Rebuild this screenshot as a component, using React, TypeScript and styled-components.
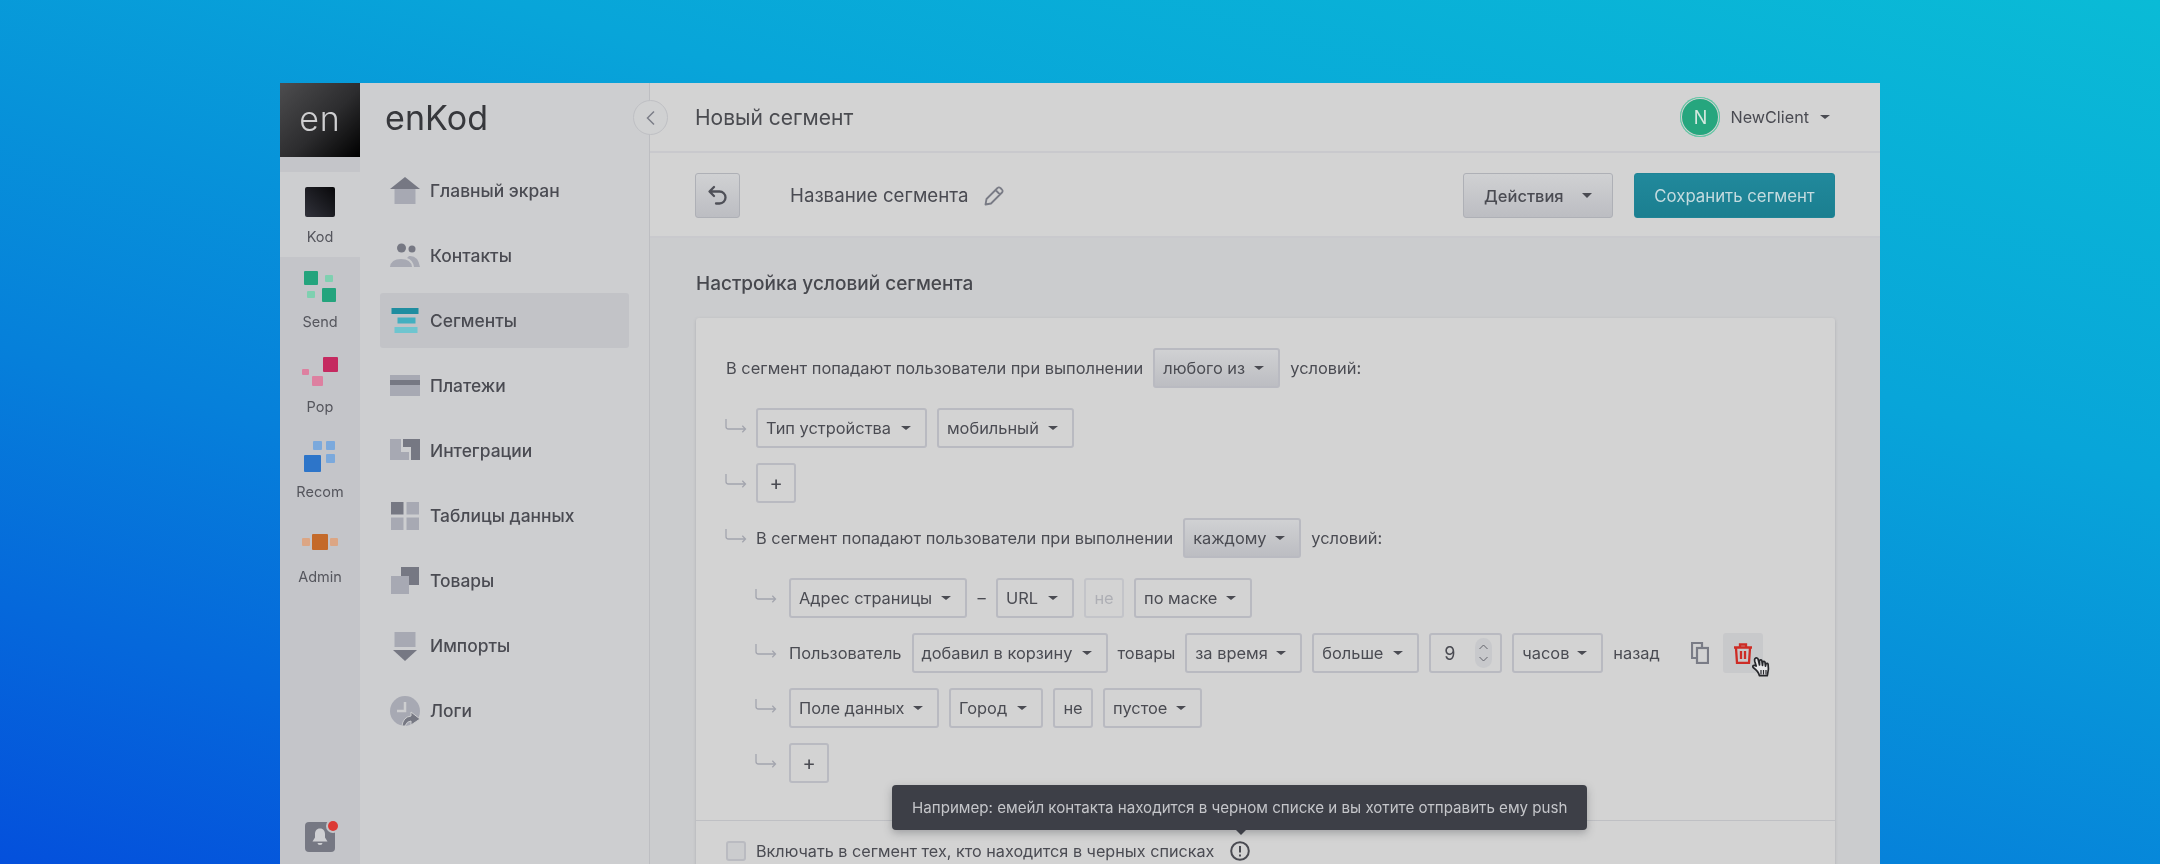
import React from "react";
import styled, { createGlobalStyle } from "styled-components";

const Global = createGlobalStyle`
  html, body { margin: 0; padding: 0; }
  body { font-family: Inter, "Noto Sans", sans-serif; color: #4a4b52; }
  * { box-sizing: border-box; }
`;

const Page = styled.div`
  width: 2160px; height: 864px; overflow: hidden;
  padding: 83px 280px 0;
  background: linear-gradient(196deg, #0abbd6 0%, #08a5d9 32%, #0680da 65%, #0450dc 100%);
`;
const Win = styled.div`
  position: relative; display: flex; width: 1600px; height: 781px; filter: blur(0.35px);
`;
const Rail = styled.aside`
  width: 80px; flex: none; background: #c4c5c9; display: flex; flex-direction: column; align-items: center;
`;
const RailLogo = styled.div`
  width: 80px; height: 74px; flex: none; margin-bottom: 15px;
  background: linear-gradient(135deg, #4d4d4f 0%, #2c2c2e 55%, #000 100%);
  color: #cfcfd1; font-size: 34px; font-weight: 300; letter-spacing: 1px;
  display: flex; align-items: center; justify-content: center; padding-bottom: 4px;
`;
const RailItem = styled.div<{ $active?: boolean }>`
  width: 80px; height: 85px; flex: none; display: flex; flex-direction: column; align-items: center; justify-content: flex-start;
  background: ${(p) => (p.$active ? "#cdced0" : "transparent")};
  font-size: 14.5px; color: #55565d;
`;
const RailIcon = styled.div`
  height: 50px; width: 80px; margin-top: 5px; flex: none; display: flex; align-items: center; justify-content: center;
`;
const RailLabel = styled.div`
  line-height: 16px; margin-top: 2px;
`;
const RailSpacer = styled.div`flex: 1;`;
const BellWrap = styled.div`
  position: relative; width: 30px; height: 30px; margin-bottom: 12px; border-radius: 4px; background: #767883;
  display: flex; align-items: center; justify-content: center;
`;
const BellDot = styled.span`
  position: absolute; right: -3px; top: -1px; width: 10px; height: 10px; border-radius: 50%; background: #dc3a35; box-shadow: 0 0 0 2px #c4c5c9;
`;

const Nav = styled.nav`
  width: 290px; flex: none; background: #cdced0; border-right: 1px solid #bdbec2; padding: 0 20px;
  display: flex; flex-direction: column;
`;
const Brand = styled.div`
  height: 68px; padding-left: 5px; display: flex; align-items: center; font-size: 34px; font-weight: 400; color: #37383c; letter-spacing: 0.1px; margin-bottom: 12px;
`;
const NavItem = styled.div<{ $active?: boolean }>`
  height: 55px; flex: none; margin-bottom: 10px; padding-left: 10px; display: flex; align-items: center; gap: 10px;
  border-radius: 3px; background: ${(p) => (p.$active ? "#c2c3c7" : "transparent")};
  font-size: 17.4px; font-weight: 500; color: #4a4b52;
`;
const NavIcon = styled.svg`width: 30px; height: 30px; flex: none;`;
const Collapse = styled.button`
  position: absolute; left: 353px; top: 17px; width: 35px; height: 35px; border-radius: 50%; padding: 0;
  border: 1px solid #bfc0c4; background: #d0d1d2; display: flex; align-items: center; justify-content: center; z-index: 3;
`;

const Main = styled.main`
  flex: 1; min-width: 0; background: #cbccce; display: flex; flex-direction: column;
`;
const Header = styled.header`
  height: 70px; flex: none; background: #d3d3d3; border-bottom: 2px solid #c9c9cd; padding: 0 48px 0 45px;
  display: flex; align-items: center; justify-content: space-between;
`;
const PageTitle = styled.h1`
  margin: 0; font-size: 21px; font-weight: 400; color: #4a4b50;
`;
const User = styled.div`
  display: flex; align-items: center; font-size: 16.2px; color: #4a4b52; margin-right: 2px;
`;
const Avatar = styled.div`
  width: 40px; height: 40px; border-radius: 50%; background: #26a67e; box-shadow: inset 0 0 0 1px #5cc7a3, inset 0 0 0 2px #d3d3d3;
  color: #d5e9e0; font-size: 18px; display: flex; align-items: center; justify-content: center; margin-right: 10px;
`;
const Caret = styled.span<{ $size?: number }>`
  display: inline-block; width: 0; height: 0; flex: none;
  border-left: ${(p) => p.$size ?? 5}px solid transparent;
  border-right: ${(p) => p.$size ?? 5}px solid transparent;
  border-top: ${(p) => (p.$size ?? 5) - 0.5}px solid #4a4b52;
`;
const UserCaret = styled(Caret)`margin-left: 11px;`;
const Toolbar = styled.div`
  height: 85px; flex: none; background: #d3d3d3; border-bottom: 2px solid #c9c9cd; padding: 2px 45px 0 45px;
  display: flex; align-items: center;
`;
const UndoButton = styled.button`
  width: 45px; height: 45px; padding: 0; border: 1px solid #aeb0b6; border-radius: 3px;
  background: linear-gradient(#d0d1d3, #bcbdc2); display: flex; align-items: center; justify-content: center;
`;
const SegmentName = styled.div`
  margin-left: 50px; font-size: 18.7px; color: #4a4b52; display: flex; align-items: center; gap: 16px; flex: 1;
`;
const ActionButton = styled.button`
  width: 150px; height: 45px; padding: 0 20px; border: 1px solid #aeb0b6; border-radius: 3px;
  background: linear-gradient(#d0d1d3, #bcbdc2); font: 500 16.5px Inter, sans-serif; color: #4a4b52;
  display: flex; align-items: center; justify-content: space-between; margin-right: 21px;
`;
const SaveButton = styled.button`
  width: 201px; height: 45px; padding: 0; border: 1px solid #1f8496; border-radius: 3px;
  background: linear-gradient(#21899c, #1b7f90); font: 400 16.8px Inter, sans-serif; color: #c4dbdf;
`;
const Content = styled.div`
  flex: 1; padding: 0 44px 0 46px; min-height: 0; overflow: hidden;
`;
const SectionTitle = styled.h2`
  margin: 0; height: 80px; padding-top: 34px; font-size: 19px; line-height: 24px; font-weight: 500; color: #47484e;
`;
const Card = styled.section`
  position: relative; width: 1139px; background: #d3d3d3; border-radius: 3px; box-shadow: 0 1px 3px rgba(110,112,120,.35);
  padding-top: 30px;
`;
const Row = styled.div<{ $indent?: number; $gap?: number }>`
  display: flex; align-items: center; height: 40px; margin-bottom: ${(p) => p.$gap ?? 20}px;
  padding-left: ${(p) => p.$indent ?? 30}px; font-size: 16.4px; color: #4a4b52; gap: 10px; white-space: nowrap;
`;
const Arrow = styled.svg<{ $deep?: boolean }>`
  width: 22px; height: 15px; flex: none; margin-left: -1px; margin-right: ${(p) => (p.$deep ? 2 : -1)}px; margin-top: -5px;
`;
const Select = styled.div<{ $w: number; $filled?: boolean }>`
  width: ${(p) => p.$w}px; height: 40px; flex: none; padding: 0 14px 0 8px; border-radius: 3px; border: 2px solid #b9bac1;
  background: ${(p) => (p.$filled ? "linear-gradient(#d0d1d3, #bcbdc2)" : "transparent")};
  display: flex; align-items: center; justify-content: space-between; color: #4a4b52;
`;
const Square = styled.div<{ $muted?: boolean }>`
  width: 40px; height: 40px; flex: none; border-radius: 3px; border: 2px solid ${(p) => (p.$muted ? "#c3c4c9" : "#b9bac1")};
  display: flex; align-items: center; justify-content: center; color: ${(p) => (p.$muted ? "#aeafb5" : "#4a4b52")};
`;
const Plus = styled(Square)`font-size: 20px; font-weight: 400;`;
const Dash = styled.span`width: 9px; text-align: center;`;
const NumberBox = styled.div`
  width: 73px; height: 40px; flex: none; border-radius: 3px; border: 2px solid #b9bac1; padding-left: 13px;
  display: flex; align-items: center; justify-content: space-between; font-size: 18px; padding-right: 8px;
`;
const Stepper = styled.div`
  width: 17px; height: 30px; border-radius: 9px; background: #c8c9cc; display: flex; align-items: center; justify-content: center;
`;
const CopyButton = styled.div`margin-left: 21px; width: 18px; height: 40px; display: flex; align-items: center; justify-content: center;`;
const TrashButton = styled.div`
  position: relative; width: 40px; height: 40px; border-radius: 3px; background: #c8c9cb; display: flex; align-items: center; justify-content: center; margin-left: 4px;
`;
const Cursor = styled.svg`position: absolute; left: 28px; top: 23px; width: 21px; height: 25px;`;
const Footer = styled.div`
  border-top: 1px solid #bfc0c4; height: 60px; padding: 20px 30px 0; display: flex; align-items: flex-start; gap: 10px; font-size: 16.2px; line-height: 20px; color: #4a4b52;
`;
const Check = styled.div`width: 20px; height: 20px; border: 2px solid #babbc1; border-radius: 3px; background: #cbccce; flex: none;`;
const Info = styled.svg`width: 20px; height: 20px; flex: none; margin-left: 6px;`;
const Tooltip = styled.div`
  position: absolute; left: 196px; top: 467px; width: 695px; height: 45px; padding-left: 20px; border-radius: 4px;
  background: #3d3f47; color: #c5c6ca; font-size: 15.13px; display: flex; align-items: center; white-space: nowrap;
  box-shadow: 0 3px 8px rgba(60,62,70,.35); z-index: 2;
  &::after {
    content: ""; position: absolute; left: 343px; bottom: -5px; width: 0; height: 0;
    border-left: 6px solid transparent; border-right: 6px solid transparent; border-top: 6px solid #3d3f47;
  }
`;

const G = "#a7a9b3";
const D = "#767883";

const Ar = ({ deep }: { deep?: boolean }) => (
  <Arrow $deep={deep} viewBox="0 0 22 15" fill="none" stroke="#a3a5ae" strokeWidth="1.3">
    <path d="M1 1v7.500q0 2.500 2.500 2.500h17M17.300 7.800l3.200 3.200-3.200 3.200" />
  </Arrow>
);

const Sel = ({ w, t, filled }: { w: number; t: string; filled?: boolean }) => (
  <Select $w={w} $filled={filled}>
    <span>{t}</span>
    <Caret $size={5} />
  </Select>
);

const navItems: { label: string; icon: React.ReactNode; active?: boolean }[] = [
  { label: "Главный экран", icon: <><path d="M15 1 L30 13 H0Z" fill={D} /><rect x="4.5" y="13" width="21" height="15" fill={G} /></> },
  { label: "Контакты", icon: <><circle cx="11.5" cy="7" r="4.5" fill={D} /><circle cx="22" cy="8" r="3.5" fill={D} /><path d="M0 26q1-8 11-8t11 8z" fill={G} /><path d="M19 15q9-1 11 11h-6q-1-7-7-9z" fill={G} /></> },
  { label: "Сегменты", active: true, icon: <><rect x="1.5" y="2" width="27" height="6" fill="#1f8da0" /><rect x="7.5" y="11.5" width="18" height="6" fill="#43afc0" /><rect x="4.5" y="21" width="23" height="6" fill="#6fc5cf" /></> },
  { label: "Платежи", icon: <><rect x="0" y="4" width="30" height="21" fill={G} /><rect x="0" y="9" width="30" height="5" fill={D} /></> },
  { label: "Интеграции", icon: <><path d="M0 3h11v13h8v8H0z" fill={G} /><path d="M13 3h17v21h-9V11h-8z" fill={D} /></> },
  { label: "Таблицы данных", icon: <><rect x="1" y="1" width="12.5" height="12.5" fill={D} /><rect x="16.5" y="1" width="12.5" height="12.5" fill={G} /><rect x="1" y="16.5" width="12.5" height="12.5" fill={G} /><rect x="16.5" y="16.5" width="12.5" height="12.5" fill={G} /></> },
  { label: "Товары", icon: <><rect x="11" y="1" width="18" height="18" fill={D} /><rect x="1" y="10" width="18" height="18" fill={G} /></> },
  { label: "Импорты", icon: <><rect x="4.5" y="1" width="21" height="15" fill={G} /><path d="M3 19h24L15 30z" fill={D} /></> },
  { label: "Логи", icon: <><circle cx="15" cy="15" r="15" fill={G} /><path d="M15 6v9H7" stroke="#cdced0" strokeWidth="2.5" fill="none" /><path d="M12 30q1-9 9-10v-4l9 7-9 6v-4q-4 0-6 5z" fill={D} stroke="#cdced0" strokeWidth="1" /></> },
];

export default function App() {
  return (
    <Page>
      <Global />
      <Win>
        <Rail>
          <RailLogo>en</RailLogo>
          <RailItem $active>
            <RailIcon>
              <svg width="30" height="30" viewBox="0 0 30 30">
                <defs><linearGradient id="k" x1="0" y1="1" x2="1" y2="0"><stop offset="0" stopColor="#31323b" /><stop offset="1" stopColor="#08080a" /></linearGradient></defs>
                <rect width="30" height="30" rx="2" fill="url(#k)" />
              </svg>
            </RailIcon>
            <RailLabel>Kod</RailLabel>
          </RailItem>
          <RailItem>
            <RailIcon>
              <svg width="34" height="32" viewBox="0 0 34 32">
                <rect x="1" y="0" width="14" height="14" rx="1" fill="#24a47d" />
                <rect x="22" y="4" width="8" height="7" rx="1" fill="#7fd0b0" />
                <rect x="4" y="20" width="8" height="7" rx="1" fill="#7fd0b0" />
                <rect x="19" y="17" width="14" height="14" rx="1" fill="#24a47d" />
              </svg>
            </RailIcon>
            <RailLabel>Send</RailLabel>
          </RailItem>
          <RailItem>
            <RailIcon>
              <svg width="36" height="30" viewBox="0 0 36 30">
                <rect x="21" y="0" width="15" height="15" rx="1" fill="#c52a60" />
                <rect x="0" y="12" width="7" height="6" rx="1" fill="#dd80a0" />
                <rect x="10" y="19" width="11" height="10" rx="1" fill="#dd80a0" />
              </svg>
            </RailIcon>
            <RailLabel>Pop</RailLabel>
          </RailItem>
          <RailItem>
            <RailIcon>
              <svg width="32" height="32" viewBox="0 0 32 32">
                <rect x="9" y="0" width="9" height="9" rx="1" fill="#7ba9dc" />
                <rect x="22" y="0" width="9" height="9" rx="1" fill="#7ba9dc" />
                <rect x="0" y="14" width="17" height="17" rx="1" fill="#2d75c9" />
                <rect x="22" y="13" width="9" height="9" rx="1" fill="#7ba9dc" />
              </svg>
            </RailIcon>
            <RailLabel>Recom</RailLabel>
          </RailItem>
          <RailItem>
            <RailIcon>
              <svg width="36" height="16" viewBox="0 0 36 16">
                <rect x="0" y="4" width="8" height="8" rx="1" fill="#dca684" />
                <rect x="10" y="0" width="16" height="16" rx="1" fill="#c46a2a" />
                <rect x="28" y="4" width="8" height="8" rx="1" fill="#dca684" />
              </svg>
            </RailIcon>
            <RailLabel>Admin</RailLabel>
          </RailItem>
          <RailSpacer />
          <BellWrap>
            <svg width="20" height="20" viewBox="0 0 20 20" fill="#cfd0d3">
              <path d="M10 1.5c-3.500 0-5 2.600-5 5.500v3.500L2.500 14.500h15L15 10.500V7c0-2.900-1.500-5.500-5-5.500z" />
              <path d="M7.500 16h5a2.500 2 0 0 1-5 0z" />
            </svg>
            <BellDot />
          </BellWrap>
        </Rail>
        <Nav>
          <Brand>enKod</Brand>
          {navItems.map((n) => (
            <NavItem key={n.label} $active={n.active}>
              <NavIcon viewBox="0 0 30 30">{n.icon}</NavIcon>
              {n.label}
            </NavItem>
          ))}
        </Nav>
        <Collapse aria-label="collapse">
          <svg width="12" height="16" viewBox="0 0 12 16" fill="none" stroke="#7c7e88" strokeWidth="1.5"><path d="M9 1.500L2.500 8 9 14.500" /></svg>
        </Collapse>
        <Main>
          <Header>
            <PageTitle>Новый сегмент</PageTitle>
            <User>
              <Avatar>N</Avatar>
              NewClient
              <UserCaret $size={5} />
            </User>
          </Header>
          <Toolbar>
            <UndoButton aria-label="undo">
              <svg width="21" height="21" viewBox="0 0 21 21" fill="none" stroke="#4f5058" strokeWidth="2.300" strokeLinecap="round" strokeLinejoin="round">
                <path d="M7 2L2.500 6.500 7 11M3 6.500h9.500a6 6 0 0 1 0 12H9" />
              </svg>
            </UndoButton>
            <SegmentName>
              Название сегмента
              <svg width="20" height="20" viewBox="0 0 20 20" fill="none" stroke="#797b85" strokeWidth="1.8" strokeLinejoin="round">
                <path d="M1.500 18.500l1-5.500L13.500 2a2 2 0 0 1 2.900 0l1.600 1.600a2 2 0 0 1 0 2.900L7 17.500zM11.500 4l4.500 4.500" />
              </svg>
            </SegmentName>
            <ActionButton>Действия<Caret $size={5.5} /></ActionButton>
            <SaveButton>Сохранить сегмент</SaveButton>
          </Toolbar>
          <Content>
            <SectionTitle>Настройка условий сегмента</SectionTitle>
            <Card>
              <Row>
                В сегмент попадают пользователи при выполнении
                <Sel w={127} t="любого из" filled />
                условий:
              </Row>
              <Row $gap={15}>
                <Ar />
                <Sel w={171} t="Тип устройства" />
                <Sel w={137} t="мобильный" />
              </Row>
              <Row $gap={15}>
                <Ar />
                <Plus>+</Plus>
              </Row>
              <Row>
                <Ar />
                В сегмент попадают пользователи при выполнении
                <Sel w={118} t="каждому" filled />
                условий:
              </Row>
              <Row $indent={60} $gap={15}>
                <Ar deep />
                <Sel w={178} t="Адрес страницы" />
                <Dash>–</Dash>
                <Sel w={78} t="URL" />
                <Square $muted>не</Square>
                <Sel w={118} t="по маске" />
              </Row>
              <Row $indent={60} $gap={15}>
                <Ar deep />
                Пользователь
                <Sel w={196} t="добавил в корзину" />
                товары
                <Sel w={117} t="за время" />
                <Sel w={107} t="больше" />
                <NumberBox>
                  9
                  <Stepper>
                    <svg width="11" height="22" viewBox="0 0 11 22" fill="none" stroke="#62636b" strokeWidth="1"><path d="M1.500 7l4-4 4 4M1.500 15l4 4 4-4" /></svg>
                  </Stepper>
                </NumberBox>
                <Sel w={91} t="часов" />
                назад
                <CopyButton>
                  <svg width="18" height="22" viewBox="0 0 18 22" fill="none" stroke="#7a7c86" strokeWidth="2.200"><path d="M5 16H1V1h10v4" /><rect x="6" y="6" width="11" height="15" /></svg>
                </CopyButton>
                <TrashButton>
                  <svg width="18" height="21" viewBox="0 0 18 21" fill="none" stroke="#cd2c26" strokeWidth="2.300">
                    <path d="M0 4.500h18M6 4V1.500h6V4M2 5l1 15h12l1-15M7 8v8M11 8v8" />
                  </svg>
                  <Cursor viewBox="0 0 21 25">
                    <path d="M4 2.500c1.300-1.200 2.800-.6 3.200 1L8.500 9V4.500c.8-1 1.800-.8 2.300 0l.7 5 .3-3.500c.8-.9 1.800-.7 2.200.2l.5 4 .5-2.500c.9-.7 1.800-.4 2.100.6.600 3.200.4 6.700-.5 9.700l-.4 1.700H8.500C7.300 15 5 13.500 2.200 11.500c-1.300-1.600.9-3 3-1.500L3.700 5.200C3.500 4.300 3.500 3.200 4 2.500z" fill="#e6e6e8" stroke="#26272b" strokeWidth="1.700" strokeLinejoin="round" />
                    <path d="M10 14v4.500M12.500 14v4.500M15 14v4.500" stroke="#26272b" strokeWidth="1.200" />
                  </Cursor>
                </TrashButton>
              </Row>
              <Row $indent={60} $gap={15}>
                <Ar deep />
                <Sel w={150} t="Поле данных" />
                <Sel w={94} t="Город" />
                <Square>не</Square>
                <Sel w={99} t="пустое" />
              </Row>
              <Row $indent={60} $gap={37}>
                <Ar deep />
                <Plus>+</Plus>
              </Row>
              <Footer>
                <Check />
                Включать в сегмент тех, кто находится в черных списках
                <Info viewBox="0 0 20 20" fill="none" stroke="#4a4b52" strokeWidth="2">
                  <circle cx="10" cy="10" r="8.800" />
                  <path d="M10 5v6.500M10 13.500v2" />
                </Info>
              </Footer>
              <Tooltip>Например: емейл контакта находится в черном списке и вы хотите отправить ему push</Tooltip>
            </Card>
          </Content>
        </Main>
      </Win>
    </Page>
  );
}
